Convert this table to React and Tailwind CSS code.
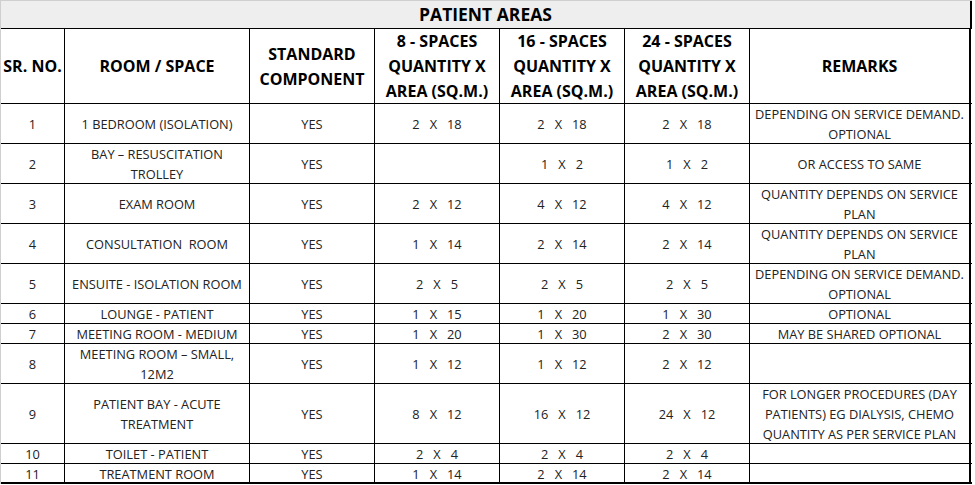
const cols = 'grid grid-cols-[64px_185px_125px_125px_125px_125px_221px]'

const rows = [
  { n: '1', room: ['1 BEDROOM (ISOLATION)'], q: [['2', '18'], ['2', '18'], ['2', '18']], rem: ['DEPENDING ON SERVICE DEMAND.', 'OPTIONAL'], h: 'h-[40px]' },
  { n: '2', room: ['BAY – RESUSCITATION', 'TROLLEY'], q: [null, ['1', '2'], ['1', '2']], rem: ['OR ACCESS TO SAME'], h: 'h-[40px]' },
  { n: '3', room: ['EXAM ROOM'], q: [['2', '12'], ['4', '12'], ['4', '12']], rem: ['QUANTITY DEPENDS ON SERVICE', 'PLAN'], h: 'h-[40px]' },
  { n: '4', room: ['CONSULTATION  ROOM'], q: [['1', '14'], ['2', '14'], ['2', '14']], rem: ['QUANTITY DEPENDS ON SERVICE', 'PLAN'], h: 'h-[40px]' },
  { n: '5', room: ['ENSUITE - ISOLATION ROOM'], q: [['2', '5'], ['2', '5'], ['2', '5']], rem: ['DEPENDING ON SERVICE DEMAND.', 'OPTIONAL'], h: 'h-[40px]' },
  { n: '6', room: ['LOUNGE - PATIENT'], q: [['1', '15'], ['1', '20'], ['1', '30']], rem: ['OPTIONAL'], h: 'h-[20px]' },
  { n: '7', room: ['MEETING ROOM - MEDIUM'], q: [['1', '20'], ['1', '30'], ['2', '30']], rem: ['MAY BE SHARED OPTIONAL'], h: 'h-[20px]' },
  { n: '8', room: ['MEETING ROOM – SMALL,', '12M2'], q: [['1', '12'], ['1', '12'], ['2', '12']], rem: [], h: 'h-[40px]' },
  { n: '9', room: ['PATIENT BAY - ACUTE', 'TREATMENT'], q: [['8', '12'], ['16', '12'], ['24', '12']], rem: ['FOR LONGER PROCEDURES (DAY', 'PATIENTS) EG DIALYSIS, CHEMO', 'QUANTITY AS PER SERVICE PLAN'], h: 'h-[60px]' },
  { n: '10', room: ['TOILET - PATIENT'], q: [['2', '4'], ['2', '4'], ['2', '4']], rem: [], h: 'h-[20px]' },
  { n: '11', room: ['TREATMENT ROOM'], q: [['1', '14'], ['2', '14'], ['2', '14']], rem: [], h: 'h-[20px]', last: true },
]

function Cell({ children, last, className = '' }) {
  return (
    <div
      className={`flex flex-col items-center justify-center text-center ${last ? 'border-r-2' : 'border-r'} border-black ${className}`}
    >
      {children}
    </div>
  )
}

function Qty({ v }) {
  if (!v) return null
  return (
    <div className="flex items-center gap-[10px]">
      <span>{v[0]}</span>
      <span>X</span>
      <span>{v[1]}</span>
    </div>
  )
}

function Lines({ items }) {
  return items.map((t, i) => (
    <div key={i} className="whitespace-pre">
      {t}
    </div>
  ))
}

export default function App() {
  return (
    <div className="h-[485px] w-[975px] bg-white font-['Open_Sans',sans-serif] text-black">
      <div className="w-[972px] border-l border-t border-[#cfcfcf]">
        <div className="flex h-[28px] items-center justify-center border-b border-r-2 border-b-black border-r-black bg-[#eeeeee] text-[17.5px] font-bold">
          PATIENT AREAS
        </div>

        <div className={`${cols} h-[75px] border-b border-black text-[16px] font-bold leading-[25px]`}>
          <Cell>SR. NO.</Cell>
          <Cell>ROOM / SPACE</Cell>
          <Cell>
            <Lines items={['STANDARD', 'COMPONENT']} />
          </Cell>
          <Cell>
            <Lines items={['8 - SPACES', 'QUANTITY X', 'AREA (SQ.M.)']} />
          </Cell>
          <Cell>
            <Lines items={['16 - SPACES', 'QUANTITY X', 'AREA (SQ.M.)']} />
          </Cell>
          <Cell>
            <Lines items={['24 - SPACES', 'QUANTITY X', 'AREA (SQ.M.)']} />
          </Cell>
          <Cell last>REMARKS</Cell>
        </div>

        {rows.map((r) => (
          <div
            key={r.n}
            className={`${cols} ${r.h} ${r.last ? 'border-b-2' : 'border-b'} border-black text-[12.8px] leading-[20px] text-[#222]`}
          >
            <Cell>{r.n}</Cell>
            <Cell>
              <Lines items={r.room} />
            </Cell>
            <Cell>YES</Cell>
            {r.q.map((v, i) => (
              <Cell key={i}>
                <Qty v={v} />
              </Cell>
            ))}
            <Cell last>
              <Lines items={r.rem} />
            </Cell>
          </div>
        ))}
      </div>
    </div>
  )
}
